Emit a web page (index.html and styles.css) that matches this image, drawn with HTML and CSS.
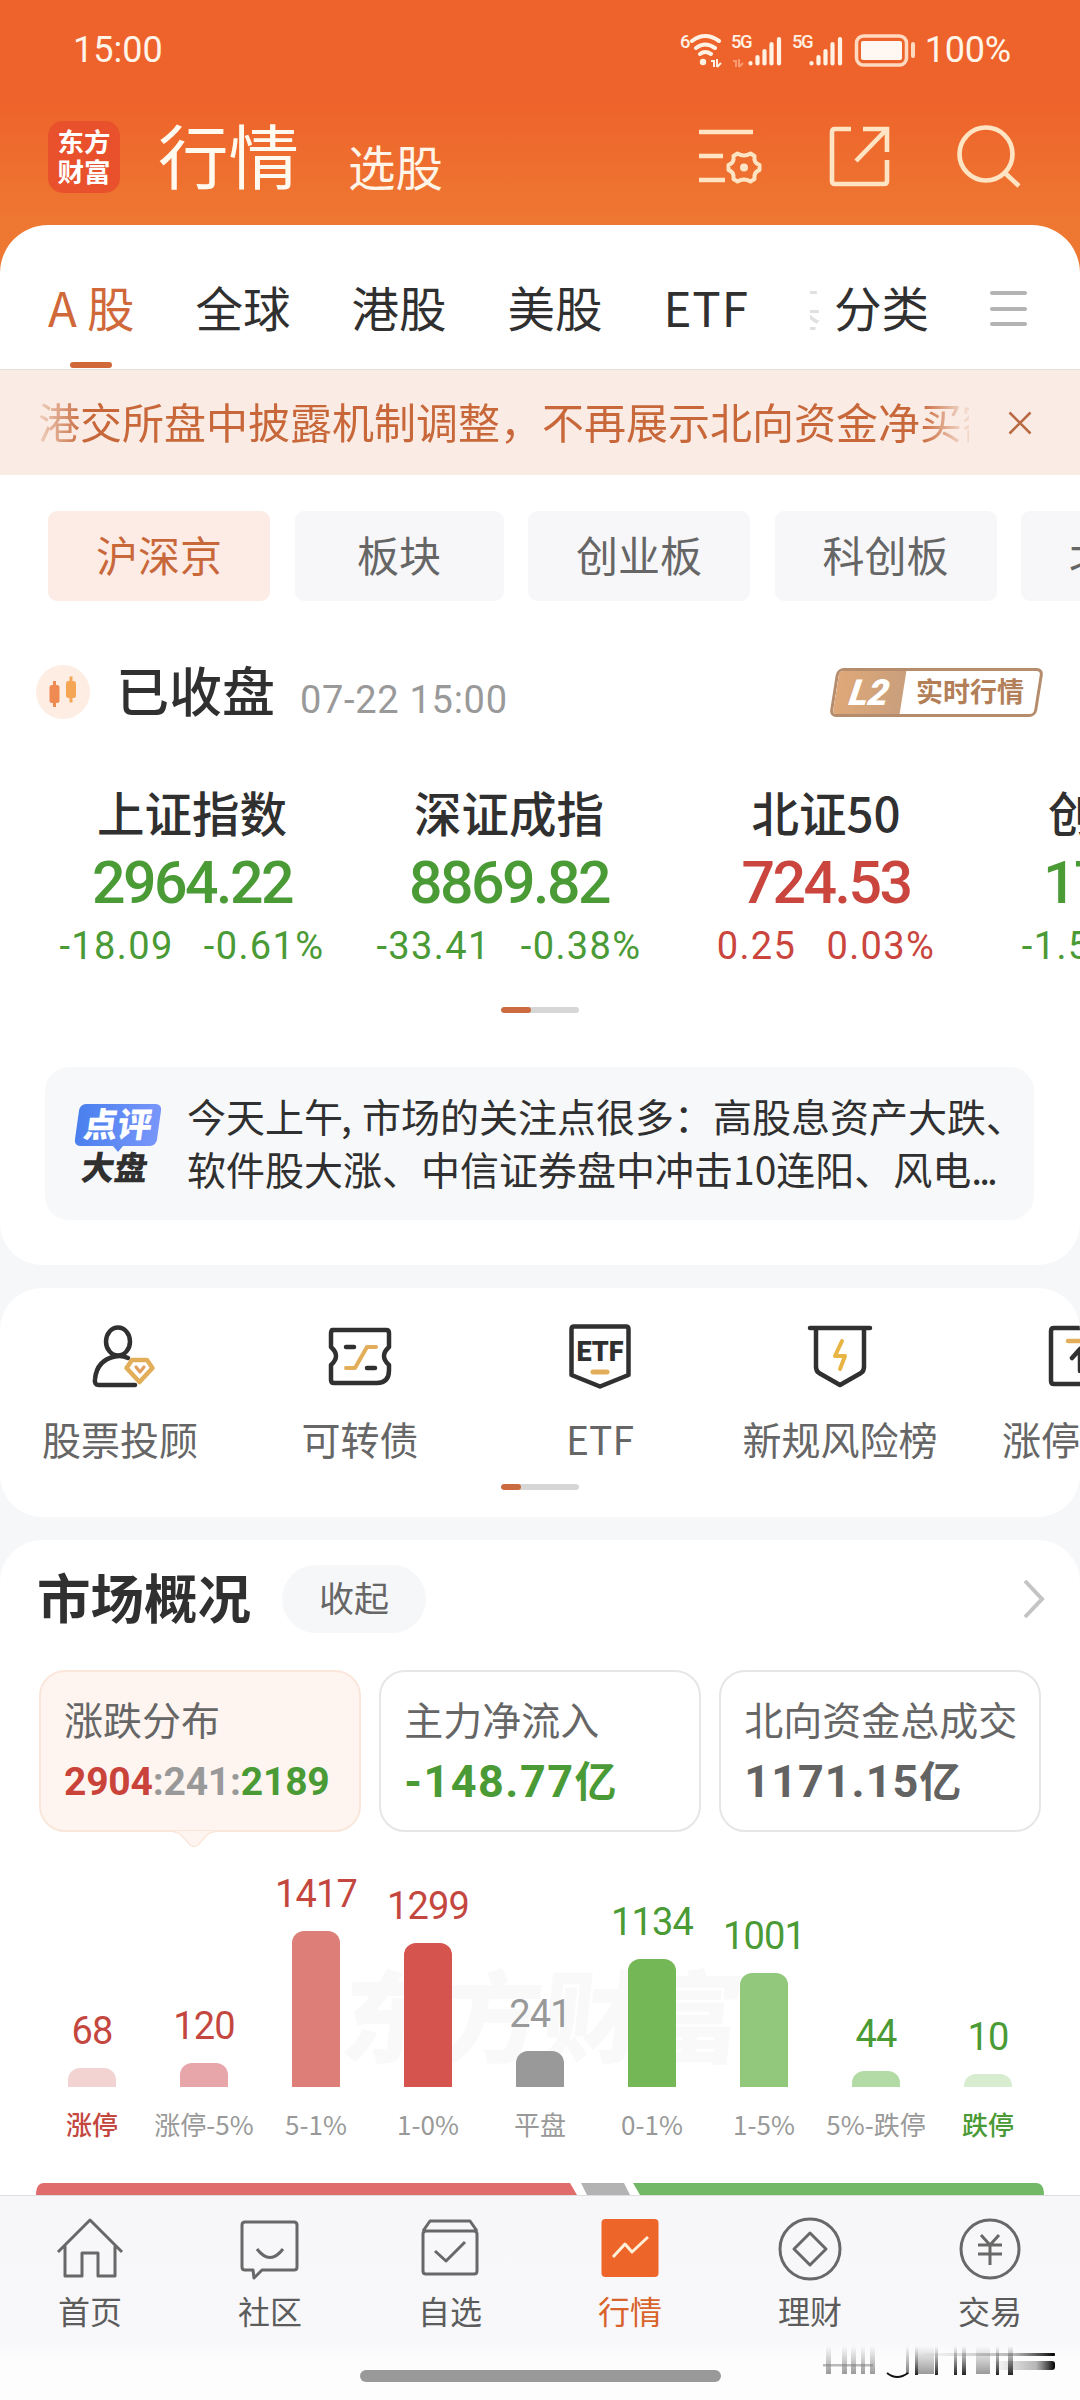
FILE: index.html
```html
<!DOCTYPE html>
<html lang="zh-CN">
<head>
<meta charset="utf-8">
<title>行情</title>
<link rel="stylesheet" href="styles.css">
</head>
<body>
<div class="app">
  <header class="top">
    <div class="status">
      <span class="num">15:00</span>
      <div class="status-right">
        <svg class="status-icons" width="240" height="40" viewBox="0 0 240 40" fill="none">
          <g class="net"><text x="1" y="18">6</text><text x="52" y="18">5G</text><text x="113" y="18">5G</text></g>
          <g stroke="#fff1e4" stroke-width="4" stroke-linecap="round">
            <path d="M13 11Q26 1 40 11M17 18Q26 11 36 18M21 24Q26 20 32 24"/>
          </g>
          <circle cx="24" cy="32" r="3.2" fill="#fff1e4"/>
          <path d="M32 31h3v6M38 37v-8M38 37l4-4" stroke="#fff1e4" stroke-width="2"/>
          <path d="M54 31h3v6M60 37v-8M60 37l4-4" stroke="#f99a70" stroke-width="2"/>
          <g stroke="#fff1e4" stroke-width="4.2" stroke-linecap="round">
            <path d="M71.500 33v.5M78.500 27v6.500M85.500 21v12.500M92.500 14v19.500M100 9v24.500"/>
            <path d="M132.500 33v.5M139.500 27v6.500M146.500 21v12.500M153.500 14v19.500M161 9v24.500"/>
          </g>
          <rect x="177.500" y="6" width="50" height="29" rx="7" stroke="#ffd9c0" stroke-width="3.500"/>
          <rect x="182" y="11" width="41" height="19" rx="2" fill="#fff8f2"/>
          <path d="M234 14v12" stroke="#ffd9c0" stroke-width="4" stroke-linecap="round"/>
        </svg>
        <span class="num">100%</span>
      </div>
    </div>
    <div class="titlebar">
      <div class="logo"><span>东方</span><span>财富</span></div>
      <h1>行情</h1>
      <span class="sub">选股</span>
      <div class="actions">
        <svg width="64" height="64" viewBox="0 0 64 64" fill="none" stroke="#ffe4c4" stroke-width="4.600">
          <path d="M0 8h54M0 32h24M0 56h26"/>
          <path stroke-width="4" stroke-linejoin="round" d="M38.500 29.500q6.500 4 13 0l4 2.500q-1 7 5 9v5q-6 2-5 9l-4 2.500q-6.500-4-13 0l-4-2.500q1-7-5-9v-5q6-2 5-9z"/>
          <circle cx="45" cy="43.500" r="4" fill="#ffe4c4" stroke="none"/>
        </svg>
        <svg width="64" height="64" viewBox="0 0 64 64" fill="none" stroke="#ffe4c4" stroke-width="4.600">
          <path d="M22 5H6q-3 0-3 3v49q0 3 3 3h49q3 0 3-3V36M34 5h24v23M58 5L27 37"/>
        </svg>
        <svg width="66" height="66" viewBox="0 0 66 66" fill="none" stroke="#ffe4c4" stroke-width="4.600">
          <circle cx="29" cy="30" r="26.500"/><path d="M48 49l14 13"/>
        </svg>
      </div>
    </div>
  </header>

  <main>
    <section class="card first">
      <nav class="tabs">
        <span class="tab on">A<i></i>股</span><span class="tab">全球</span><span class="tab">港股</span><span class="tab">美股</span><span class="tab etf-tab">ETF</span>
        <span class="clip">基</span><span class="tab cat">分类</span>
        <span class="menu"><b></b><b></b><b></b></span>
      </nav>
      <div class="notice">
        <p>港交所盘中披露机制调整，不再展示北向资金净买额</p>
        <svg width="24" height="24" viewBox="0 0 24 24" stroke="#b96a42" stroke-width="2.600"><path d="M1.500 1.500l21 21M22.500 1.500l-21 21"/></svg>
      </div>
      <div class="chips">
        <span class="chip on">沪深京</span><span class="chip short">板块</span><span class="chip">创业板</span><span class="chip">科创板</span><span class="chip">北交所</span>
      </div>
      <div class="session">
        <svg width="54" height="54" viewBox="0 0 54 54"><circle cx="27" cy="27" r="27" fill="#fdede2"/>
          <path d="M18.500 16v26" stroke="#ee8a52" stroke-width="3"/><rect x="13.500" y="20" width="10" height="18" rx="2.500" fill="#ee8a52"/>
          <path d="M35 11.500v26" stroke="#f4a654" stroke-width="3"/><rect x="30" y="16" width="10" height="17" rx="2.500" fill="#f4a654"/></svg>
        <h2>已收盘</h2>
        <time class="num">07-22 15:00</time>
        <div class="l2"><b>L2</b><span>实时行情</span></div>
      </div>
      <div class="indices">
        <div class="index down"><h3>上证指数</h3><strong class="num">2964.22</strong><p class="num"><span>-18.09</span><span>-0.61%</span></p></div>
        <div class="index down"><h3>深证成指</h3><strong class="num">8869.82</strong><p class="num"><span>-33.41</span><span>-0.38%</span></p></div>
        <div class="index up"><h3>北证50</h3><strong class="num">724.53</strong><p class="num"><span>0.25</span><span>0.03%</span></p></div>
        <div class="index down"><h3>创业板指</h3><strong class="num">1725.49</strong><p class="num"><span>-1.51</span><span>-0.09%</span></p></div>
      </div>
      <div class="pager"><i class="wide"></i></div>
      <div class="comment">
        <div class="tag"><span class="tag-top">点评</span><svg width="10" height="6" viewBox="0 0 10 6"><path d="M0 0h10L5 6z" fill="#5f8af5"/></svg><span class="tag-bottom">大盘</span></div>
        <p>今天上午<span class="comma">,</span>市场的关注点很多：高股息资产大跌、<br>软件股大涨、中信证券盘中冲击10连阳、风电<span class="dots">...</span></p>
      </div>
    </section>

    <section class="card tools">
      <div class="tool-row">
        <div class="tool">
          <svg width="72" height="66" viewBox="-3 -1 72 66" fill="none" stroke="#303030" stroke-width="4.500" stroke-linecap="round" stroke-linejoin="round">
            <ellipse cx="31" cy="17.500" rx="12" ry="14"/><path d="M41 34Q35 31 28 32.500Q10 36 8 55Q7 61 12 61H48"/>
            <path d="M45 36h15l5.500 8-13 14-13-14z" stroke="#e2ae5a" stroke-width="4.500"/><path d="M49 43l4 5 4-5" stroke="#e2a060" stroke-width="3.200"/></svg>
          <span>股票投顾</span></div>
        <div class="tool">
          <svg width="72" height="66" viewBox="0 1 72 66" fill="none" stroke="#303030" stroke-width="4.500" stroke-linecap="round" stroke-linejoin="round">
            <path d="M8 8H62q3 0 3 3V25q-10 9 0 18V48q0 13-12 13H10q-3 0-3-3V43q10-9 0-18V11q0-3 3-3z"/>
            <path d="M22 25h8M43 46h8"/><path d="M22 46h9l12-21h9" stroke="#e2ae5a" stroke-width="4"/></svg>
          <span>可转债</span></div>
        <div class="tool">
          <svg width="72" height="66" viewBox="0 0 72 66" fill="none" stroke="#303030" stroke-width="4.500" stroke-linecap="round" stroke-linejoin="round">
            <path d="M10 3.500H62q2.500 0 2.500 2.500V52L36 63.500 7.500 52V6q0-2.500 2.500-2.500z"/>
            <path d="M29 49h14" stroke="#e2ae5a" stroke-width="5"/><text class="etf" x="36" y="38" stroke="none">ETF</text></svg>
          <span>ETF</span></div>
        <div class="tool">
          <svg width="72" height="66" viewBox="0 0 72 66" fill="none" stroke="#303030" stroke-width="4.500" stroke-linecap="round" stroke-linejoin="round">
            <path d="M6 5H66M12 5V44q0 4 3 6l21 12 21-12q3-2 3-6V5"/>
            <path d="M38 18l-7 15h10l-5 13" stroke="#e8b444" stroke-width="4"/></svg>
          <span>新规风险榜</span></div>
        <div class="tool">
          <svg width="72" height="66" viewBox="0 0 72 66" fill="none" stroke="#303030" stroke-width="4.500" stroke-linecap="round" stroke-linejoin="round">
            <path d="M10 5H62q3 0 3 3V58q0 3-3 3H10q-3 0-3-3V8q0-3 3-3z"/>
            <path d="M24 18h24" stroke="#e2ae5a"/><path d="M28 35l8-9 8 9M36 28v20"/></svg>
          <span>涨停分析</span></div>
      </div>
      <div class="pager"><i></i></div>
    </section>

    <section class="card market">
      <div class="market-head">
        <h2>市场概况</h2><button>收起</button>
        <svg width="24" height="40" viewBox="0 0 24 40" fill="none" stroke="#c4c4c4" stroke-width="4"><path d="M3 2l17 18L3 38"/></svg>
      </div>
      <div class="stats">
        <div class="stat on"><span>涨跌分布</span>
          <strong class="num ratio"><em class="red">2904</em><em class="gray">:241:</em><em class="green">2189</em></strong>
          <svg class="pointer" width="42" height="16" viewBox="0 0 42 16"><path d="M0 0H42Q36 1 32 6L25 14Q21 17 17 14L10 6Q6 1 0 0z" fill="#fef5f1"/><path d="M0 .8Q6 1 10 6L17 14Q21 17 25 14L32 6Q36 1 42 .8" fill="none" stroke="#fbe6da" stroke-width="1.500"/></svg></div>
        <div class="stat"><span>主力净流入</span><strong class="num green">-148.77<small>亿</small></strong></div>
        <div class="stat"><span>北向资金总成交</span><strong class="num dark">1171.15<small>亿</small></strong></div>
      </div>
      <div class="chart">
        <div class="watermark">东方财富</div>
        <div class="col c1"><b class="num">68</b><i style="height:19px"></i><span>涨停</span></div>
        <div class="col c2"><b class="num">120</b><i style="height:24px"></i><span>涨停-5%</span></div>
        <div class="col c3"><b class="num">1417</b><i style="height:156px"></i><span>5-1%</span></div>
        <div class="col c4"><b class="num">1299</b><i style="height:144px"></i><span>1-0%</span></div>
        <div class="col c5"><b class="num">241</b><i style="height:36px"></i><span>平盘</span></div>
        <div class="col c6"><b class="num">1134</b><i style="height:128px"></i><span>0-1%</span></div>
        <div class="col c7"><b class="num">1001</b><i style="height:114px"></i><span>1-5%</span></div>
        <div class="col c8"><b class="num">44</b><i style="height:16px"></i><span>5%-跌停</span></div>
        <div class="col c9"><b class="num">10</b><i style="height:13px"></i><span>跌停</span></div>
      </div>
      <svg class="strip" width="1008" height="12" viewBox="0 0 1008 12">
        <path d="M8 0H534L541 12H0Q0 0 8 0z" fill="#e06c6b"/><path d="M545 0H588L594 12H551z" fill="#b3b3b3"/><path d="M597 0H1000Q1008 0 1008 12H604z" fill="#72b866"/>
      </svg>
    </section>
  </main>

  <footer class="dock">
    <nav>
      <div class="item"><svg width="68" height="68" viewBox="0 0 68 68"><path d="M2 37L34 5 66 37M9 31V61H26V38H42V61H59V31"/></svg><span>首页</span></div>
      <div class="item"><svg width="68" height="68" viewBox="0 0 68 68"><path d="M9 7H58q3 0 3 3V52q0 3-3 3H26L18 63 17 55H9q-3 0-3-3V10q0-3 3-3zM21 34q13 17 26 0"/></svg><span>社区</span></div>
      <div class="item"><svg width="68" height="68" viewBox="0 0 68 68"><path d="M7 16L14 6H54L61 16M10 16H58q3 0 3 3V56q0 3-3 3H10q-3 0-3-3V19q0-3 3-3zM19 36L30 46 49 27"/></svg><span>自选</span></div>
      <div class="item on"><svg width="68" height="68" viewBox="0 0 68 68"><rect x="5.500" y="4" width="57" height="58" rx="4" fill="#ee652a" stroke="none"/><path d="M17 42L29 29 36 37 52 22" stroke="#fff0d8"/></svg><span>行情</span></div>
      <div class="item"><svg width="68" height="68" viewBox="0 0 68 68"><circle cx="34" cy="34" r="30"/><path d="M34 18L50 34 34 50 18 34z"/></svg><span>理财</span></div>
      <div class="item"><svg width="68" height="68" viewBox="0 0 68 68"><circle cx="34" cy="34" r="29"/><path d="M25 20L34 30 43 20M34 30V50M22 30H46M22 39H46"/></svg><span>交易</span></div>
    </nav>
    <div class="home"></div>
    <svg class="smear" width="236" height="36" viewBox="0 0 236 36">
      <defs>
        <linearGradient id="v" x1="0" y1="0" x2="0" y2="1"><stop offset="0" stop-color="#333" stop-opacity="0"/><stop offset="1" stop-color="#222"/></linearGradient>
        <linearGradient id="h" x1="0" y1="0" x2="1" y2="0"><stop offset="0" stop-color="#333" stop-opacity="0"/><stop offset=".7" stop-color="#333" stop-opacity=".35"/><stop offset="1" stop-color="#000"/></linearGradient>
      </defs>
      <g fill="url(#v)">
        <g opacity=".45"><rect x="4" y="1" width="5" height="28"/><rect x="20" y="1" width="5" height="28"/><rect x="29" y="1" width="5" height="28"/><rect x="39" y="1" width="4" height="28"/><rect x="48" y="1" width="5" height="28"/><rect x="96" y="1" width="16" height="28"/><rect x="154" y="1" width="14" height="28"/></g>
        <rect x="84" y="1" width="3" height="28" opacity=".6"/><rect x="93" y="1" width="3" height="29"/><rect x="113" y="1" width="3" height="29"/><rect x="132" y="1" width="3" height="29"/><rect x="140" y="1" width="4" height="29"/><rect x="174" y="1" width="3" height="29"/><rect x="186" y="1" width="5" height="29"/>
      </g>
      <path d="M65 28q10 8 21 0" fill="none" stroke="#111" stroke-width="2"/>
      <rect x="1" y="19" width="50" height="2.500" fill="#777" opacity=".5"/>
      <rect x="100" y="8" width="133" height="3" rx="1" fill="url(#h)"/><rect x="170" y="16" width="63" height="9" rx="3" fill="url(#h)"/>
    </svg>
  </footer>
</div>
</body>
</html>
```
FILE: styles.css
```css
* { box-sizing: border-box; margin: 0; padding: 0; }
body { width: 1080px; height: 2400px; overflow: hidden; background: #f6f7f9; color: #303030; font-family: "Noto Sans CJK SC", sans-serif; }
h1, h2, h3 { font-weight: 500; }
em, i { font-style: normal; }
svg { display: block; flex: none; }
.num { font-family: Roboto, "Noto Sans CJK SC", sans-serif; }
.app { width: 1080px; height: 2400px; display: flex; flex-direction: column; overflow: hidden; }

.top { height: 273px; flex: none; background: linear-gradient(#ee632b 0, #ee632b 100px, #ee7832 225px); color: #fff4e8; }
.status { height: 100px; padding: 0 69px 0 73px; display: flex; justify-content: space-between; align-items: center; font-size: 36px; }
.status-right { display: flex; align-items: center; gap: 6px; }
.status-right .num { letter-spacing: -.2px; }
.status-icons .net { font: 500 18.500px Roboto, sans-serif; fill: #fff1e4; }
.status-icons .net text { letter-spacing: -1.500px; }
.titlebar { height: 114px; padding: 0 57px 0 48px; display: flex; align-items: center; }
.logo { width: 72px; height: 72px; border-radius: 15px; background: #e8512b; display: flex; flex-direction: column; align-items: center; padding-top: 5px; }
.logo span { font-size: 26.500px; line-height: 30px; font-weight: 700; color: #fff; }
h1 { font-size: 70.500px; line-height: 80px; font-weight: 400; color: #fffaf0; margin: -8px 0 0 38px; }
.sub { font-size: 47.500px; line-height: 60px; margin: 17px 0 0 49px; }
.actions { margin-left: auto; display: flex; gap: 64px; }
.actions svg:first-child { margin-right: 2px; }

main { height: 1970px; margin-top: -48px; display: flex; flex-direction: column; }
.card { background: #fff; flex: none; overflow: hidden; }
.first { height: 1040px; border-radius: 48px 48px 42px 42px; }
.tabs { height: 145px; display: flex; align-items: center; padding: 20px 53px 0 48px; font-size: 47.500px; line-height: 60px; border-bottom: 1px solid #e4ddd9; }
.tab { margin-right: 61px; white-space: nowrap; position: relative; }
.tab.on { color: #d0683a; }
.tab.on i { display: inline-block; width: 10px; }
.tab.on::after { content: ""; position: absolute; left: 22px; top: 85px; width: 42px; height: 6px; border-radius: 3px; background: #d0683a; }
.etf-tab { letter-spacing: 1px; }
.clip { width: 11px; overflow: hidden; direction: rtl; color: #ccc; opacity: .6; margin-right: 13px; }
.cat { margin-right: 0; }
.menu { margin-left: auto; display: flex; flex-direction: column; gap: 11.500px; padding-bottom: 0; margin-top: 3px; }
.menu b { width: 37px; height: 4px; border-radius: 2px; background: #b3b3b3; }
.notice { height: 105px; background: #faece4; display: flex; justify-content: space-between; align-items: center; padding: 0 48px 0 38px; color: #c8683a; }
.notice p { width: 931px; overflow: hidden; white-space: nowrap; font-size: 42px; line-height: 60px; margin-top: -3px; mask-image: linear-gradient(90deg, rgba(0,0,0,.2), #000 45px, #000 883px, rgba(0,0,0,.15) 925px); }
.chips { display: flex; gap: 24.500px; padding: 36px 0 0 48px; }
.chip { flex: none; width: 222px; height: 90px; line-height: 85px; text-align: center; border-radius: 9px; background: #f7f7f9; color: #666; font-size: 42px; }
.chip.short { width: 209px; }
.chip.on { background: #fdece6; color: #c8683a; }
.session { height: 150px; padding: 32px 36px 0; display: flex; align-items: center; }
.session h2 { font-size: 53px; line-height: 60px; margin: -6px 0 0 26px; }
.session time { font-size: 38px; line-height: 50px; letter-spacing: .7px; color: #999; margin: 15px 0 0 25px; }
.l2 { margin: 0 4px 0 auto; width: 207px; height: 49px; border: 3px solid #b58c6c; border-radius: 7px; transform: skewX(-9deg); display: flex; overflow: hidden; }
.l2 b { width: 67px; background: linear-gradient(90deg, #dfa878, #c99f7c); color: #fff; font: italic 900 36px/44px Roboto, sans-serif; text-align: center; }
.l2 span { flex: 1; text-align: center; font-size: 27px; line-height: 39px; font-weight: 700; color: #b27f58; transform: skewX(9deg); }
.indices { display: flex; padding: 31px 0 0 33.500px; }
.index { width: 317px; flex: none; display: flex; flex-direction: column; align-items: center; white-space: nowrap; }
.index h3 { font-size: 47.500px; line-height: 60px; }
.index strong { font-size: 59px; line-height: 70px; font-weight: 500; letter-spacing: -2.500px; margin-top: 6px; }
.index p { font-size: 38px; line-height: 44px; letter-spacing: 1.400px; display: flex; gap: 30px; margin-top: 6px; }
.down { color: #4a9a36; }
.up { color: #c9453e; }
.index h3 { color: #303030; }
.pager { width: 78px; height: 6px; border-radius: 3px; background: #d6d6d6; margin: 39px auto 0; overflow: hidden; }
.pager i { display: block; width: 20px; height: 6px; border-radius: 3px; background: #cd6b40; }
.pager i.wide { width: 30px; }
.comment { margin: 54px 46px 0 45px; height: 153px; border-radius: 24px; background: #f7f8fa; display: flex; padding: 22px 0 0 31px; }
.comment p { font-size: 39px; line-height: 53px; white-space: nowrap; }
.comment .comma { display: inline-block; width: 19px; text-indent: -2px; }
.dots { letter-spacing: -3px; }
.tag { width: 82px; margin: 15px 28px 0 1px; font-weight: 900; text-align: center; }
.tag span { display: block; transform: skewX(-8deg); }
.tag svg { margin-left: 36px; }
.tag-top { height: 42px; border-radius: 6px; background: linear-gradient(90deg, #4a80ee, #7896fa); color: #fff; font-size: 34px; line-height: 38px; }
.tag-bottom { font-size: 33px; line-height: 38px; margin: -5px 6px 0 0; }

.tools { height: 229px; margin-top: 23px; border-radius: 42px; }
.tool-row { display: flex; padding-top: 35px; }
.tool { width: 240px; flex: none; display: flex; flex-direction: column; align-items: center; font-size: 39px; line-height: 50px; color: #666; gap: 24px; }
.etf { font: 900 27px Roboto, sans-serif; fill: #303030; text-anchor: middle; }
.tools .pager { margin-top: 21px; }

.market { height: 655px; margin-top: 23px; border-radius: 42px 42px 0 0; }
.market-head { height: 130px; padding: 0 34px 12px 37px; display: flex; align-items: center; }
.market-head h2 { font-size: 53.500px; line-height: 60px; font-weight: 700; margin-top: -6px; }
.market-head button { width: 144px; height: 68px; border: 0; border-radius: 34px; background: #f6f7f9; color: #666; font: 35px/60px "Noto Sans CJK SC", sans-serif; margin-left: 31px; padding-bottom: 4px; }
.market-head svg { margin-left: auto; }
.stats { display: flex; gap: 18.500px; padding: 0 39px; }
.stat { position: relative; flex: 1; height: 162px; border: 2px solid #e6e6e6; border-radius: 26px; padding: 21px 0 0 23px; display: flex; flex-direction: column; white-space: nowrap; }
.stat.on { background: #fef5f1; border-color: #fbe6da; }
.stat span { font-size: 39px; line-height: 50px; color: #666; }
.stat strong { font-size: 45px; line-height: 60px; letter-spacing: 1.500px; font-weight: 700; margin-top: 9px; }
.stat small { font-size: 42px; font-weight: 700; letter-spacing: 0; }
.stat .ratio { font-size: 39px; letter-spacing: -.2px; }
.stat .dark { letter-spacing: 1px; }
.pointer { position: absolute; left: 132px; top: 159px; }
.red { color: #c9433a; }
.gray { color: #999; }
.green { color: #4a9a36; }
.dark { color: #636363; }
.chart { position: relative; height: 316px; padding: 0 36px; display: flex; align-items: flex-end; }
.watermark { position: absolute; left: 343px; top: 110px; font-size: 100px; line-height: 140px; font-weight: 900; color: #f9f9f9; transform: skewX(-6deg); }
.col { position: relative; width: 112px; display: flex; flex-direction: column; align-items: center; white-space: nowrap; }
.col b { font-size: 38px; line-height: 44px; font-weight: 400; letter-spacing: -.8px; margin-bottom: 15px; }
.col i { width: 48px; border-radius: 12px 12px 0 0; background: currentColor; }
.col span { font-size: 26px; line-height: 40px; color: #999; margin: 17px 0 4px; }
.c1 b, .c2 b, .c3 b, .c4 b, .c1 span { color: #c4473f; }
.c6 b, .c7 b, .c8 b, .c9 b, .c9 span { color: #4a9a36; }
.c5 b { color: #999; }
.c1 span, .c9 span { font-weight: 500; }
.c1 i { background: #f2d3d2; }
.c2 i { background: #e7a6a9; }
.c3 i { background: #dd7e78; }
.c4 i { background: #d5544d; }
.c5 i { background: #999; }
.c6 i { background: #73b756; }
.c7 i { background: #92c87c; }
.c8 i { background: #b3dba6; }
.c9 i { background: #d8edd0; }
.strip { margin: 35px 36px 0; }

.dock { position: relative; height: 205px; flex: none; background: linear-gradient(#f7f7f9 0, #f8f8fa 145px, #fdfdfe 165px); border-top: 1px solid #dedee0; }
.dock nav { display: flex; padding-top: 19px; }
.item { width: 180px; display: flex; flex-direction: column; align-items: center; color: #5c5c5c; font-size: 32px; line-height: 40px; gap: 7px; }
.item.on { color: #d8642c; }
.item svg { fill: none; stroke: #686868; stroke-width: 3; stroke-linejoin: round; }
.home { width: 361px; height: 12px; border-radius: 6px; background: #999; margin: 40px auto 0; }
.smear { position: absolute; left: 822px; top: 149px; }
```
